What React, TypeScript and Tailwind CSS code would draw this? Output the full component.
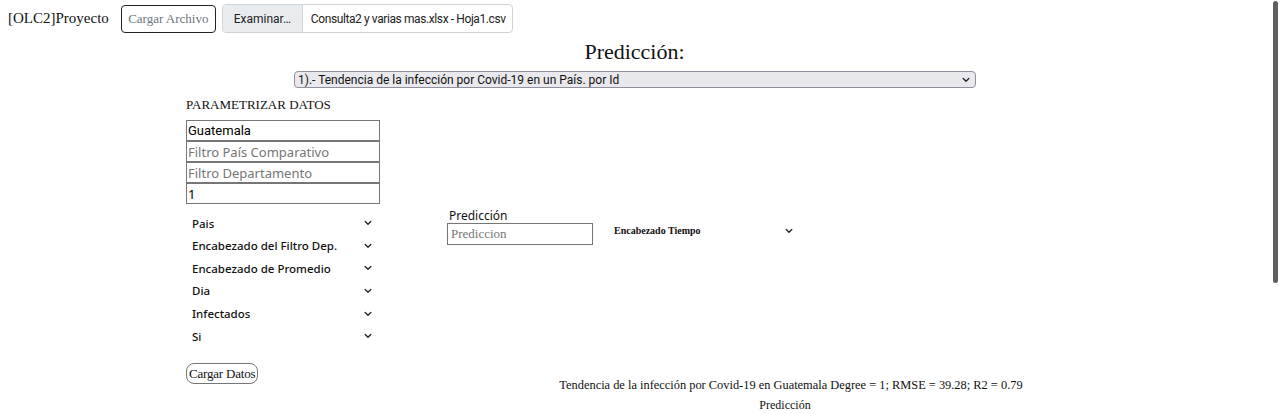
import React from "react";

const serif = { fontFamily: "'Liberation Serif', 'Times New Roman', serif" };
const sans = { fontFamily: "'Noto Sans', 'Open Sans', sans-serif" };
const narrow = { fontFamily: "'Roboto', 'Liberation Sans', sans-serif" };

function Chevron({ className = "" }: { className?: string }) {
  return (
    <svg width="8" height="6" viewBox="0 0 8 6" className={className}>
      <polyline points="1.2,1.5 4,4.3 6.8,1.5" fill="none" stroke="#222" strokeWidth="1.3" strokeLinecap="round" strokeLinejoin="round" />
    </svg>
  );
}

function FakeSelect({ label }: { label: string }) {
  return (
    <div className="flex h-[22.6px] items-center justify-between pl-[6px] pr-[8px]">
      <span className="text-[11.5px] font-medium text-[#111]" style={sans}>{label}</span>
      <Chevron />
    </div>
  );
}

export default function App() {
  const selects = ["Pais", "Encabezado del Filtro Dep.", "Encabezado de Promedio", "Dia", "Infectados", "Si"];
  return (
    <div className="relative h-[414px] w-[1280px] overflow-hidden bg-white text-black">
      {/* header */}
      <div className="flex items-center pl-[8px] pt-[4px]">
        <span className="text-[15px] text-[#111]" style={serif}>[OLC2]Proyecto</span>
        <button className="ml-[12px] h-[28px] w-[95px] rounded-[4px] border border-[#222] text-[13px] text-[#6c757d]" style={serif}>
          Cargar Archivo
        </button>
        <div className="ml-[6px] flex h-[29px] w-[291px] overflow-hidden rounded-[4px] border border-[#d0d4d8] text-[12px] tracking-[-0.4px] text-[#222]" style={narrow}>
          <div className="flex w-[80px] shrink-0 items-center justify-center border-r border-[#d0d4d8] bg-[#e9ecef] tracking-normal">Examinar…</div>
          <div className="flex flex-1 items-center whitespace-nowrap pl-[8px]">Consulta2 y varias mas.xlsx - Hoja1.csv</div>
        </div>
      </div>

      {/* title */}
      <div className="mt-[5px] w-[1269px] text-center text-[22px] leading-[28px] text-[#111]" style={serif}>Predicción:</div>

      {/* main select */}
      <div className="ml-[294px] mt-[5px] flex h-[17px] w-[682px] items-center justify-between rounded-[4px] border border-[#8f8f9d] bg-[#e9e9ed] pl-[3px] pr-[5px]">
        <span className="text-[12px] leading-none text-[#111]" style={narrow}>1).- Tendencia de la infección por Covid-19 en un País. por Id</span>
        <Chevron />
      </div>

      {/* body */}
      <div className="mt-[7px] flex">
        {/* left column */}
        <div className="ml-[186px] w-[194px]">
          <div className="text-[13px] leading-[20px] text-[#111]" style={serif}>PARAMETRIZAR DATOS</div>
          <div className="mt-[5px] flex flex-col">
            <input className="h-[21px] w-[194px] border border-[#767676] px-[1px] text-[13px] text-black outline-none" style={narrow} defaultValue="Guatemala" />
            <input className="h-[21px] w-[194px] border border-[#767676] px-[1px] text-[13px] placeholder:text-[#757575] outline-none" style={sans} placeholder="Filtro País Comparativo" />
            <input className="h-[21px] w-[194px] border border-[#767676] px-[1px] text-[13px] placeholder:text-[#757575] outline-none" style={sans} placeholder="Filtro Departamento" />
            <input className="h-[21px] w-[194px] border border-[#767676] px-[1px] text-[13px] text-black outline-none" style={sans} defaultValue="1" />
          </div>
          <div className="mt-[8px] flex flex-col">
            {selects.map((s) => (
              <FakeSelect key={s} label={s} />
            ))}
          </div>
          <button className="mt-[15px] h-[21px] rounded-[8px] border border-[#767676] px-[2px] text-[13px] leading-none tracking-[-0.2px] text-[#111]" style={serif}>
            Cargar Datos
          </button>
        </div>

        {/* right area */}
        <div className="ml-[67px] flex w-[688px] flex-col">
          <div className="mt-[114px] flex items-start">
            <div className="flex flex-col">
              <span className="pl-[2px] text-[12px] leading-[14px] text-[#111]" style={sans}>Predicción</span>
              <input className="h-[22px] w-[146px] border border-[#767676] px-[3px] text-[13px] placeholder:text-[#757575] outline-none" style={serif} placeholder="Prediccion" />
            </div>
            <div className="ml-[21px] mt-[14px] flex w-[182px] items-center justify-between pr-[3px]">
              <span className="text-[10px] font-bold text-[#111]" style={serif}>Encabezado Tiempo</span>
              <Chevron />
            </div>
          </div>
          <div className="mt-[132px] text-center text-[12.4px] leading-[16px] text-[#111]" style={serif}>
            Tendencia de la infección por Covid-19 en Guatemala Degree = 1; RMSE = 39.28; R2 = 0.79
          </div>
          <div className="mt-[4px] pr-[12px] text-center text-[12px] leading-[16px] text-[#111]" style={serif}>
            Predicción
          </div>
        </div>
      </div>

      {/* overlay scrollbar */}
      <div className="absolute right-[2px] top-[1px] h-[282px] w-[5px] rounded-full bg-[#5f5f5f]" />
    </div>
  );
}
